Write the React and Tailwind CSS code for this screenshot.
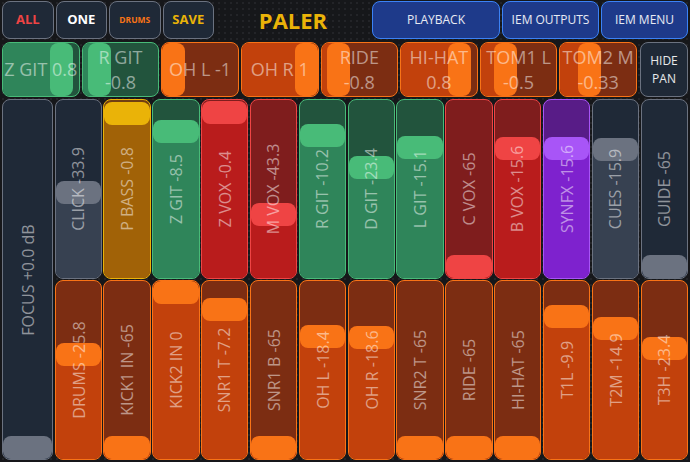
import React from 'react';

const C = {
  gray: { border: 'border-[#6b7280]', empty: 'bg-[#1f2937]', fill: 'bg-[#374151]', knob: 'bg-[#6b7280]' },
  yellow: { border: 'border-[#eab308]', empty: 'bg-[#713f12]', fill: 'bg-[#a16207]', knob: 'bg-[#eab308]' },
  green: { border: 'border-[#48bb78]', empty: 'bg-[#22543d]', fill: 'bg-[#2f855a]', knob: 'bg-[#48bb78]' },
  red: { border: 'border-[#ef4444]', empty: 'bg-[#7f1d1d]', fill: 'bg-[#b91c1c]', knob: 'bg-[#ef4444]' },
  purple: { border: 'border-[#a855f7]', empty: 'bg-[#581c87]', fill: 'bg-[#7e22ce]', knob: 'bg-[#a855f7]' },
  orange: { border: 'border-[#f97316]', empty: 'bg-[#7c2d12]', fill: 'bg-[#c2410c]', knob: 'bg-[#f97316]' },
};

// [name, pan, colour, fits on one line]
const PANS = [
  ['Z GIT', 0.8, 'green', true],
  ['R GIT', -0.8, 'green', false],
  ['OH L', -1, 'orange', true],
  ['OH R', 1, 'orange', true],
  ['RIDE', -0.8, 'orange', false],
  ['HI-HAT', 0.8, 'orange', false],
  ['TOM1 L', -0.5, 'orange', false],
  ['TOM2 M', -0.33, 'orange', false],
];

const TOP = [
  ['CLICK', -33.9, 'gray'],
  ['P BASS', -0.8, 'yellow'],
  ['Z GIT', -8.5, 'green'],
  ['Z VOX', -0.4, 'red'],
  ['M VOX', -43.3, 'red'],
  ['R GIT', -10.2, 'green'],
  ['D GIT', -23.4, 'green'],
  ['L GIT', -15.1, 'green'],
  ['C VOX', -65, 'red'],
  ['B VOX', -15.6, 'red'],
  ['SYNFX', -15.6, 'purple'],
  ['CUES', -15.9, 'gray'],
  ['GUIDE', -65, 'gray'],
];

const BOTTOM = [
  ['DRUMS', -25.8],
  ['KICK1 IN', -65],
  ['KICK2 IN', 0],
  ['SNR1 T', -7.2],
  ['SNR1 B', -65],
  ['OH L', -18.4],
  ['OH R', -18.6],
  ['SNR2 T', -65],
  ['RIDE', -65],
  ['HI-HAT', -65],
  ['T1L', -9.9],
  ['T2M', -14.9],
  ['T3H', -23.4],
];

function Fader({ label, frac, color }) {
  const c = C[color];
  return (
    <div className={`relative h-full rounded-[8px] border-[1.5px] overflow-hidden ${c.border} ${c.empty}`}>
      <div
        className={`absolute inset-x-0 bottom-0 ${c.fill}`}
        style={{ top: `calc((100% - 23px) * ${frac} + 11px)` }}
      />
      <div
        className={`absolute inset-x-0 h-[23px] rounded-[8px] ${c.knob}`}
        style={{ top: `calc((100% - 23px) * ${frac})` }}
      />
      <div className="absolute inset-0 flex items-center justify-center">
        <span className="-rotate-90 whitespace-nowrap text-[16px] leading-none text-white/50">{label}</span>
      </div>
    </div>
  );
}

function Pan({ label, value, color, oneLine }) {
  const c = C[color];
  const frac = (value + 1) / 2;
  return (
    <div className={`relative flex-1 h-full rounded-[8px] border-[1.5px] overflow-hidden ${c.border} ${c.empty}`}>
      <div
        className={`absolute inset-y-0 left-0 ${c.fill}`}
        style={{ width: `calc((100% - 23px) * ${frac} + 11px)` }}
      />
      <div
        className={`absolute inset-y-0 w-[23px] rounded-[8px] ${c.knob}`}
        style={{ left: `calc((100% - 23px) * ${frac})` }}
      />
      <div className="absolute inset-0 flex flex-col items-center justify-center text-center whitespace-nowrap text-[18px] leading-[25px] text-white/50">
        {oneLine ? (
          <span>{label} {value}</span>
        ) : (
          <>
            <span>{label}</span>
            <span>{value}</span>
          </>
        )}
      </div>
    </div>
  );
}

function GrayBtn({ children, className }) {
  return (
    <button className={`w-[51.5px] h-full rounded-[8px] border-[1.5px] border-[#6b7280] bg-[#1f2937] font-bold ${className}`}>
      {children}
    </button>
  );
}

function BlueBtn({ children, w }) {
  return (
    <button className={`${w} h-full rounded-[8px] border-[1.5px] border-[#3b82f6] bg-[#1e3a8a] text-[12px] text-white/90`}>
      {children}
    </button>
  );
}

export default function App() {
  return (
    <div className="w-[690px] h-[462px] overflow-hidden flex flex-col px-[2px] pt-[1px] bg-[#16171a] bg-[radial-gradient(circle,#232428_1px,transparent_1px)] bg-[length:6px_6px] font-['Open_Sans',sans-serif]">
      {/* Top bar */}
      <div className="h-[38px] flex gap-[2px] shrink-0">
        <GrayBtn className="text-[13px] text-[#ef4444]">ALL</GrayBtn>
        <GrayBtn className="text-[13px] text-white">ONE</GrayBtn>
        <GrayBtn className="text-[8.5px] text-[#f97316]">DRUMS</GrayBtn>
        <GrayBtn className="text-[13px] text-[#eab308]">SAVE</GrayBtn>
        <div className="flex-1 flex items-center justify-center">
          <span className="text-[22px] font-bold text-[#eab308]">PALER</span>
        </div>
        <BlueBtn w="w-[128px]">PLAYBACK</BlueBtn>
        <BlueBtn w="w-[97px]">IEM OUTPUTS</BlueBtn>
        <BlueBtn w="w-[87px]">IEM MENU</BlueBtn>
      </div>

      {/* Pan row */}
      <div className="mt-[3px] h-[55px] flex gap-[2px] shrink-0">
        {PANS.map(([l, v, c, one]) => (
          <Pan key={l} label={l} value={v} color={c} oneLine={one} />
        ))}
        <button className="ml-[1px] w-[48px] h-full rounded-[8px] border-[1.5px] border-[#6b7280] bg-[#1f2937] text-[12px] leading-[18px] text-white/90">
          HIDE<br />PAN
        </button>
      </div>

      {/* Faders */}
      <div className="mt-[2px] h-[361px] flex gap-[1.5px] shrink-0">
        <div className="w-[51px] shrink-0">
          <Fader label="FOCUS +0.0 dB" frac={1} color="gray" />
        </div>
        {TOP.map(([l, v, c], i) => (
          <div key={l + i} className="flex-1 flex flex-col gap-[1.5px]">
            <div className="flex-1">
              <Fader label={`${l} ${v}`} frac={-v / 65} color={c} />
            </div>
            <div className="flex-1">
              <Fader label={`${BOTTOM[i][0]} ${BOTTOM[i][1]}`} frac={-BOTTOM[i][1] / 65} color="orange" />
            </div>
          </div>
        ))}
      </div>
    </div>
  );
}
